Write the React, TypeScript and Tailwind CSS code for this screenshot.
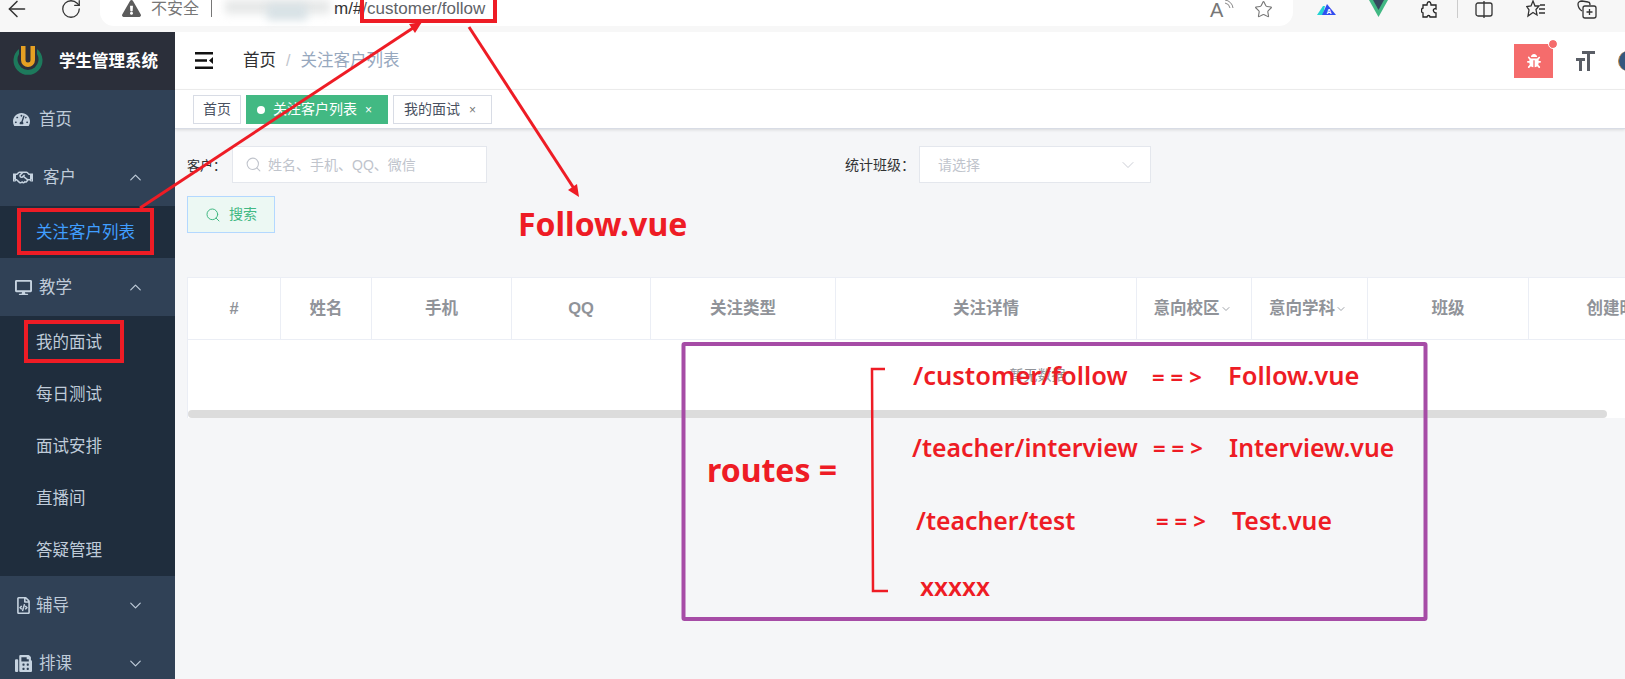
import { FaTachometerAlt, FaRegHandshake, FaDesktop, FaRegFileCode, FaFax, FaBug, FaExclamationTriangle } from "react-icons/fa";
import { ChevronUp, ChevronDown, ArrowLeft, RotateCw, Search, Star } from "lucide-react";

const cjk = "font-['Liberation_Sans','Noto_Sans_CJK_SC',sans-serif]";
const note = "font-['Noto_Sans','Noto_Sans_CJK_SC',sans-serif]";

const MenuHead = ({ icon, label, open, gap }: { icon: React.ReactNode; label: string; open?: boolean; gap: string }) => (
  <div className="h-[58px] bg-[#304156] flex items-center pl-[13px] pr-[30px] text-[#bfcbd9] text-[16.500px] shrink-0">
    <span className="w-[20px] flex justify-center text-[#c6d3e0] text-[17px]">{icon}</span>
    <span className={gap}>{label}</span>
    <span className="ml-auto">
      {open ? <ChevronUp size={19} strokeWidth={1.5} /> : <ChevronDown size={19} strokeWidth={1.5} />}
    </span>
  </div>
);

const SubItem = ({ label, active }: { label: string; active?: boolean }) => (
  <div className={`h-[52px] bg-[#1f2d3d] flex items-center pl-[36px] text-[16.500px] shrink-0 ${active ? "text-[#409eff]" : "text-[#bfcbd9]"}`}>
    {label}
  </div>
);

const Sidebar = () => (
  <aside className="w-[175px] shrink-0 bg-[#304156] flex flex-col overflow-hidden">
    <div className="h-[58px] bg-[#2b2f3a] flex items-center pl-[13px] shrink-0">
      <svg width="30" height="36" viewBox="0 0 30 36">
        <path d="M6 6 A14.5 14.5 0 1 0 24 6 L24 11 A10.5 10.5 0 1 1 6 11 Z" fill="#1d7a5c" />
        <path d="M8 3 h4.5 v14 a2.5 2.5 0 0 0 5 0 v-14 h4.5 v14 a7 7 0 0 1 -14 0 Z" fill="#e5a023" />
      </svg>
      <span className="ml-[16px] text-white text-[16.500px] font-bold whitespace-nowrap">学生管理系统</span>
    </div>
    <div className="h-[58px] flex items-center pl-[13px] text-[#bfcbd9] text-[16.500px] shrink-0">
      <span className="w-[17px] flex justify-center text-[#c6d3e0] text-[17px]"><FaTachometerAlt /></span>
      <span className="ml-[9px]">首页</span>
    </div>
    <MenuHead icon={<FaRegHandshake className="text-[23px]" />} label="客户" open gap="ml-[10px]" />
    <SubItem label="关注客户列表" active />
    <MenuHead icon={<FaDesktop />} label="教学" open gap="ml-[6px]" />
    <SubItem label="我的面试" />
    <SubItem label="每日测试" />
    <SubItem label="面试安排" />
    <SubItem label="直播间" />
    <SubItem label="答疑管理" />
    <MenuHead icon={<FaRegFileCode />} label="辅导" gap="ml-[3px]" />
    <MenuHead icon={<FaFax />} label="排课" gap="ml-[6px]" />
  </aside>
);

const BrowserBar = () => (
  <div className="h-[32px] bg-[#f7f7f7] flex items-start shrink-0 relative">
    <div className="w-[100px] flex items-center pl-[4px] gap-[30px] h-[18px] text-[#333]">
      <ArrowLeft size={26} strokeWidth={1.4} />
      <RotateCw size={22} strokeWidth={1.4} />
    </div>
    <div className="w-[1193px] h-[26px] bg-white rounded-br-[14px] rounded-bl-[14px] flex items-start pl-[22px] pr-[20px] text-[16px] text-[#666] leading-[18px]">
      <FaExclamationTriangle className="text-[#5c5c5c] text-[19px] mt-[-1px]" />
      <span className="ml-[10px] text-[#777]">不安全</span>
      <span className="ml-[12px] w-px h-[17px] bg-[#777]" />
      <span className="ml-[13px] w-[105px] h-[20px] relative">
        <span className="absolute left-0 top-0 w-[105px] h-[14px] bg-[#e6e8e8] blur-[4px]" />
        <span className="absolute left-[42px] top-[4px] w-[40px] h-[16px] bg-[#d8e2e6] blur-[4px]" />
      </span>
      <span className="ml-[4px] text-[17px] text-[#333] whitespace-nowrap">
        m/#<span className="text-[#5f6368]">/customer/follow</span>
      </span>
      <span className="ml-auto flex items-start gap-[19px] text-[#777]">
        <span className="relative w-[25px] h-[20px] text-[20px] leading-[20px]">
          A
          <svg className="absolute left-[13px] -top-[1px]" width="12" height="12" viewBox="0 0 12 12" fill="none" stroke="#888" strokeWidth="1">
            <path d="M2 1 A9 9 0 0 1 10 9" />
            <path d="M2 4 A6 6 0 0 1 7 9" />
          </svg>
        </span>
        <Star size={19} strokeWidth={1.4} />
      </span>
    </div>
    <div className="ml-[24px] flex items-start gap-[33px]">
      <svg width="19" height="14" viewBox="0 0 19 14" className="mt-[3px]">
        <path d="M0 12 L6 3 L8 3 L6 12 Z" fill="#22d3d3" />
        <path d="M10 1 L19 12 L5 12 Z" fill="#2f4ff0" />
        <text x="9.5" y="11" fontSize="7" fill="#fff" fontFamily="Liberation Sans" fontWeight="bold">A</text>
      </svg>
      <svg width="19" height="17" viewBox="0 0 19 17">
        <path d="M0 0 H19 L9.5 17 Z" fill="#41b883" />
        <path d="M4 0 H15 L9.5 10 Z" fill="#35495e" />
      </svg>
      <svg width="17" height="18" viewBox="0 0 17 18" fill="none" stroke="#222" strokeWidth="1.3" className="mt-[1px]">
        <path d="M7 1 C9 0 10 2 10 4 H15 V8 C13 7 12 9 12.500 10 C13 12 15 12 15 12 V16 H9 C9 14 6 14 6 16 H2 V12 C0 12 0 7 2 7 V4 H6 C6 3 6 2 7 1 Z" />
      </svg>
      <span className="w-px h-[18px] bg-[#ccc] -ml-[14px]" />
      <svg width="18" height="17" viewBox="0 0 18 17" fill="none" stroke="#333" strokeWidth="1.3" className="-ml-[16px] mt-[1px]">
        <rect x="1" y="2" width="16" height="13" rx="2" />
        <path d="M9 0 V17" />
      </svg>
      <svg width="20" height="18" viewBox="0 0 20 18" fill="none" stroke="#333" strokeWidth="1.3">
        <path d="M7 1 L9 6 L13 6 L10 9.500 L11 15 L7 12.500 L2 16 L3 10 L0.800 6.500 L5 6 Z" />
        <path d="M14 5 H19 M13 9 H19 M13 13 H19" />
      </svg>
      <svg width="20" height="19" viewBox="0 0 20 19" fill="none" stroke="#333" strokeWidth="1.3" className="ml-[-2px]">
        <path d="M5 11 C2 9 1 6 1 4 C1 2 3 1 5 1 L11 2 C12 2 13 3 13 5" />
        <rect x="6" y="6" width="13" height="12" rx="2" />
        <path d="M12.500 9 V15 M9.500 12 H15.500" />
      </svg>
    </div>
  </div>
);

const TopBar = () => (
  <div className="h-[58px] bg-white flex items-center shrink-0 border-b border-[#f0f0f0] relative">
    <svg className="ml-[20px]" width="18" height="17" viewBox="0 0 18 17" fill="#111">
      <rect x="0" y="0" width="18" height="2.500" />
      <rect x="0" y="7.250" width="12" height="2.500" />
      <rect x="0" y="14.500" width="18" height="2.500" />
      <path d="M18 5 V12 L14 8.500 Z" />
    </svg>
    <span className="ml-[30px] text-[16.500px] text-[#303133]">首页</span>
    <span className="ml-[10px] text-[16px] text-[#c0c4cc]">/</span>
    <span className="ml-[10px] text-[16.500px] text-[#97a8be]">关注客户列表</span>
    <div className="ml-auto flex items-center">
      <div className="w-[39px] h-[34px] bg-[#f56c6c] mt-[1px] flex items-center justify-center relative">
        <FaBug className="text-white text-[14px]" />
        <span className="absolute -top-[4px] -right-[4px] w-[8px] h-[8px] rounded-full bg-[#f56c6c] outline outline-white" />
      </div>
      <svg className="ml-[23px]" width="19" height="20" viewBox="0 0 19 20" fill="#5a5e66">
        <path d="M6 0 H19 V3 H14 V20 H11 V3 H6 Z" />
        <path d="M0 7 H9 V10 H6 V20 H3 V10 H0 Z" />
      </svg>
      <span className="ml-[23px] w-[7px] h-[20px] overflow-hidden block">
        <span className="block w-[20px] h-[20px] rounded-full bg-[#35577e] border-l border-[#c98a3f]" />
      </span>
    </div>
  </div>
);

const Tags = () => (
  <div className="h-[39px] bg-white flex items-start pt-[5px] pl-[18px] gap-[5px] border-b border-[#d8dce5] shadow-[0_1px_3px_rgba(0,0,0,0.12)] text-[14px] shrink-0 relative">
    <div className="w-[48px] h-[29px] border border-[#d8dce5] text-[#495060] flex items-center justify-center">首页</div>
    <div className="w-[142px] h-[29px] bg-[#42b983] text-white flex items-center pl-[10px]">
      <span className="w-[8px] h-[8px] rounded-full bg-white mr-[8px] ml-[1px]" />
      关注客户列表
      <span className="ml-[8px] text-[12px]">×</span>
    </div>
    <div className="w-[99px] h-[29px] border border-[#d8dce5] text-[#495060] flex items-center pl-[10px]">
      我的面试
      <span className="ml-[9px] text-[12px] text-[#777]">×</span>
    </div>
  </div>
);

const columns = [
  { label: "#", width: "w-[93px]" },
  { label: "姓名", width: "w-[91px]" },
  { label: "手机", width: "w-[140px]" },
  { label: "QQ", width: "w-[139px]" },
  { label: "关注类型", width: "w-[185px]" },
  { label: "关注详情", width: "w-[301px]" },
  { label: "意向校区", width: "w-[115px]", sort: true },
  { label: "意向学科", width: "w-[116px]", sort: true },
  { label: "班级", width: "w-[161px]" },
  { label: "创建时间", width: "w-[182px]" },
];

const Table = () => (
  <div className="mt-[44px] bg-white border-l border-t border-[#ebeef5] overflow-hidden">
    <div className="flex h-[62px] border-b border-[#ebeef5]">
      {columns.map((c) => (
        <div key={c.label} className={`${c.width} shrink-0 flex items-center justify-center border-r border-[#ebeef5] text-[16.500px] font-bold text-[#909399]`}>
          <span className={c.sort ? "ml-[-3px]" : ""}>{c.label}</span>
          {c.sort && <ChevronDown size={12} className="text-[#a0a4aa]" />}
        </div>
      ))}
    </div>
    <div className="h-[70px] flex items-center justify-center pl-[262px] text-[14px] text-[#909399]">暂无数据</div>
    <div className="h-[8px] w-[1419px] bg-[#dcdcdc] rounded-[4px]" />
  </div>
);

const Content = () => (
  <div className="flex-1 bg-[#f5f6f8] pl-[12px] pt-[17px] overflow-hidden">
    <div className="flex items-center h-[37px] text-[13px] text-[#303133]">
      <span className="w-[45px] pt-[2px]">客户：</span>
      <div className="w-[255px] h-[37px] bg-white border border-[#e4e7ed] flex items-center pl-[12px] text-[14px] text-[#c0c4cc]">
        <Search size={17} strokeWidth={1.5} />
        <span className="ml-[6px] pt-[2px]">姓名、手机、QQ、微信</span>
      </div>
      <span className="ml-[358px] w-[74px] text-[14px] pt-[2px] whitespace-nowrap">统计班级：</span>
      <div className="w-[232px] h-[37px] bg-white border border-[#e4e7ed] flex items-center pl-[18px] pr-[12px] text-[14px] text-[#c0c4cc]">
        <span className="pt-[2px]">请选择</span>
        <ChevronDown className="ml-auto" size={20} strokeWidth={1} />
      </div>
    </div>
    <div className="mt-[13px] w-[88px] h-[37px] bg-[#ecf8f3] border border-[#b3d8ff] flex items-center pl-[17px] text-[14px] text-[#42b983]">
      <Search size={16} strokeWidth={1.5} />
      <span className="ml-[8px]">搜索</span>
    </div>
    <Table />
  </div>
);

// hand-drawn markup on top of the screenshot
const Annotations = () => (
  <div className={`absolute inset-0 pointer-events-none ${note}`}>
    <svg className="absolute inset-0" width="1625" height="679" fill="none">
      <rect x="362" y="-4" width="133" height="25" stroke="#ee1c25" strokeWidth="4" />
      <rect x="19" y="210" width="133" height="43" stroke="#ee1c25" strokeWidth="4" />
      <rect x="26" y="322" width="96" height="39" stroke="#ee1c25" strokeWidth="4" />
      <path d="M140 208 L416 26" stroke="#ee1c25" strokeWidth="3" />
      <path d="M422 22 L409 24 L415 33 Z" fill="#ee1c25" />
      <path d="M469 27 L575 190" stroke="#ee1c25" strokeWidth="3" />
      <path d="M579 197 L568 190 L577 184 Z" fill="#ee1c25" />
      <rect x="683.500" y="344" width="742" height="275" rx="1" stroke="#a64ca6" strokeWidth="4" />
      <path d="M885 369 H872 L873 591 H888" stroke="#ee1c25" strokeWidth="2.500" />
    </svg>
    <span className="absolute left-[518px] top-[202px] text-[32px] leading-[44px] font-bold text-[#ee1c25]">Follow.vue</span>
    <span className="absolute left-[707px] top-[448px] text-[32px] leading-[44px] font-bold text-[#ee1c25] whitespace-pre">routes =</span>
    <span className="absolute left-[913px] top-[357px] text-[25.500px] leading-[36px] font-semibold text-[#ee1c25]">/customer/follow</span>
    <span className="absolute left-[1152px] top-[358px] text-[22px] leading-[36px] font-bold text-[#ee1c25] tracking-[6px]">==&gt;</span>
    <span className="absolute left-[1228px] top-[357px] text-[25.500px] leading-[36px] font-semibold text-[#ee1c25]">Follow.vue</span>
    <span className="absolute left-[912px] top-[429px] text-[24.800px] leading-[36px] font-semibold text-[#ee1c25]">/teacher/interview</span>
    <span className="absolute left-[1153px] top-[429px] text-[22px] leading-[36px] font-bold text-[#ee1c25] tracking-[6px]">==&gt;</span>
    <span className="absolute left-[1229px] top-[429px] text-[24.800px] leading-[36px] font-semibold text-[#ee1c25]">Interview.vue</span>
    <span className="absolute left-[916px] top-[502px] text-[24.800px] leading-[36px] font-semibold text-[#ee1c25]">/teacher/test</span>
    <span className="absolute left-[1156px] top-[502px] text-[22px] leading-[36px] font-bold text-[#ee1c25] tracking-[6px]">==&gt;</span>
    <span className="absolute left-[1232px] top-[502px] text-[24.800px] leading-[36px] font-semibold text-[#ee1c25]">Test.vue</span>
    <span className="absolute left-[920px] top-[568px] text-[25px] leading-[36px] font-semibold text-[#ee1c25]">xxxxx</span>
  </div>
);

export default function App() {
  return (
    <div className={`relative w-[1625px] h-[679px] overflow-hidden flex flex-col bg-white ${cjk}`}>
      <BrowserBar />
      <div className="flex flex-1 min-h-0">
        <Sidebar />
        <div className="flex-1 min-w-0 flex flex-col">
          <TopBar />
          <Tags />
          <Content />
        </div>
      </div>
      <Annotations />
    </div>
  );
}
